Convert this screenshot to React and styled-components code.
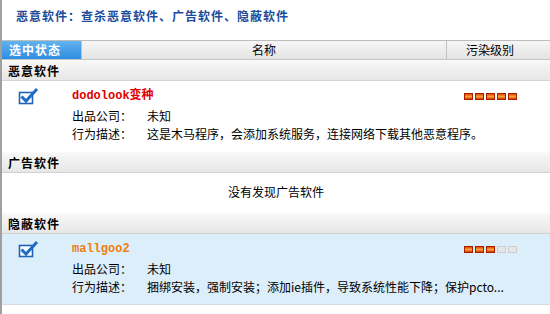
import React from "react";
import styled, { createGlobalStyle } from "styled-components";

const GlobalStyle = createGlobalStyle`
  html, body {
    margin: 0;
    padding: 0;
    background: #fff;
  }
  body {
    font-family: "Noto Sans CJK SC", "Liberation Sans", sans-serif;
    font-size: 12px;
    color: #000;
  }
`;

const Frame = styled.div`
  width: 548px;
  height: 314px;
  border-left: 2px solid #a0a0a0;
  overflow: hidden;
  background: #fff;
`;

const Title = styled.div`
  height: 40px;
  box-sizing: border-box;
  padding: 8px 0 0 14px;
  line-height: 16px;
  font-weight: bold;
  letter-spacing: 1px;
  color: #1b4c9b;
`;

const HeaderRow = styled.div`
  display: flex;
  height: 20px;
  box-sizing: border-box;
  border-top: 1px solid #bdbdbd;
  border-bottom: 1px solid #c4c4c4;
  background: linear-gradient(#f6f6f6, #e4e4e4);
  line-height: 18px;
`;

const HeaderCell = styled.div`
  box-sizing: border-box;
  width: ${(p) => p.$width};
  flex: ${(p) => (p.$grow ? 1 : "none")};
  text-align: ${(p) => (p.$left ? "left" : "center")};
  padding: ${(p) => p.$pad || "0"};
  border-right: ${(p) => (p.$divider ? "1px solid #c0c0c0" : "none")};
  ${(p) =>
    p.$active &&
    `
    background: linear-gradient(#62b3ef, #2f8ce0);
    color: #fff;
    font-weight: bold;
    letter-spacing: 1px;
    border-right: 1px solid #9ccaf0;
  `}
`;

const GroupRow = styled.div`
  height: 21px;
  box-sizing: border-box;
  padding-left: 6px;
  line-height: 20px;
  font-weight: bold;
  letter-spacing: 1px;
  border-top: 1px solid #fafafa;
  border-bottom: 1px solid #d2d2d2;
  background: linear-gradient(#f7f7f7, #e7e7e7);
`;

const Item = styled.div`
  display: flex;
  height: 71px;
  box-sizing: border-box;
  padding-top: 6px;
  background: ${(p) => (p.$selected ? "#ddeefb" : "#fff")};
  border-bottom: 1px solid ${(p) => (p.$selected ? "#d4dde6" : "#fff")};
`;

const CheckCol = styled.div`
  flex: none;
  width: 70px;
  padding-left: 15px;
  box-sizing: border-box;
`;

const InfoCol = styled.div`
  flex: 1;
  min-width: 0;
  display: flex;
  flex-direction: column;
`;

const Name = styled.div`
  height: 18px;
  line-height: 18px;
  margin-bottom: 2px;
  font-family: "Liberation Mono", "Noto Sans CJK SC", monospace;
  font-weight: bold;
  font-size: 12px;
  color: ${(p) => p.$color};
`;

const Field = styled.div`
  display: flex;
  height: 18px;
  line-height: 18px;
  white-space: nowrap;
`;

const Label = styled.span`
  width: 75px;
  flex: none;
`;

const LevelCol = styled.div`
  flex: none;
  width: 103px;
  box-sizing: border-box;
  padding: 6px 17px 0 0;
  display: flex;
  justify-content: center;
  align-items: flex-start;
  gap: 2px;
`;

const Bar = styled.span`
  width: 9px;
  height: 7px;
  box-sizing: border-box;
  border: 1px solid ${(p) => (p.$on ? "#a81c00" : "#cdcdcd")};
  background: ${(p) =>
    p.$on
      ? "linear-gradient(#e35a0c 0, #e35a0c 1px, #f4a43a 2px, #f4a43a 3px, #e0520a 4px)"
      : "#e6e6e6"};
`;

const Empty = styled.div`
  height: 40px;
  line-height: 38px;
  text-align: center;
`;

const CheckIcon = () => (
  <svg width="22" height="18" viewBox="0 0 22 18">
    <rect x="2.5" y="5.5" width="13" height="11" fill="#fff" stroke="#1f63b8" strokeWidth="1.6" />
    <path d="M4.5 9.5 L9 14 L20 2" fill="none" stroke="#1e6cc4" strokeWidth="3" strokeLinejoin="miter" />
  </svg>
);

const Level = ({ value }) => (
  <LevelCol>
    {[0, 1, 2, 3, 4].map((i) => (
      <Bar key={i} $on={i < value} />
    ))}
  </LevelCol>
);

const threats = {
  malware: [
    {
      name: "dodolook变种",
      color: "#e00000",
      company: "未知",
      desc: "这是木马程序，会添加系统服务，连接网络下载其他恶意程序。",
      level: 5,
    },
  ],
  hidden: [
    {
      name: "mallgoo2",
      color: "#f07d0c",
      company: "未知",
      desc: "捆绑安装，强制安装；添加ie插件，导致系统性能下降；保护pcto...",
      level: 3,
      selected: true,
    },
  ],
};

const ThreatItem = ({ item }) => (
  <Item $selected={item.selected}>
    <CheckCol>
      <CheckIcon />
    </CheckCol>
    <InfoCol>
      <Name $color={item.color}>{item.name}</Name>
      <Field>
        <Label>出品公司：</Label>
        <span>{item.company}</span>
      </Field>
      <Field>
        <Label>行为描述：</Label>
        <span>{item.desc}</span>
      </Field>
    </InfoCol>
    <Level value={item.level} />
  </Item>
);

export default function App() {
  return (
    <Frame>
      <GlobalStyle />
      <Title>恶意软件：查杀恶意软件、广告软件、隐蔽软件</Title>
      <HeaderRow>
        <HeaderCell $width="80px" $left $pad="0 0 0 7px" $active>
          选中状态
        </HeaderCell>
        <HeaderCell $grow $divider>
          名称
        </HeaderCell>
        <HeaderCell $width="103px" $pad="0 17px 0 0">
          污染级别
        </HeaderCell>
      </HeaderRow>
      <GroupRow>恶意软件</GroupRow>
      {threats.malware.map((t) => (
        <ThreatItem key={t.name} item={t} />
      ))}
      <GroupRow>广告软件</GroupRow>
      <Empty>没有发现广告软件</Empty>
      <GroupRow>隐蔽软件</GroupRow>
      {threats.hidden.map((t) => (
        <ThreatItem key={t.name} item={t} />
      ))}
    </Frame>
  );
}
